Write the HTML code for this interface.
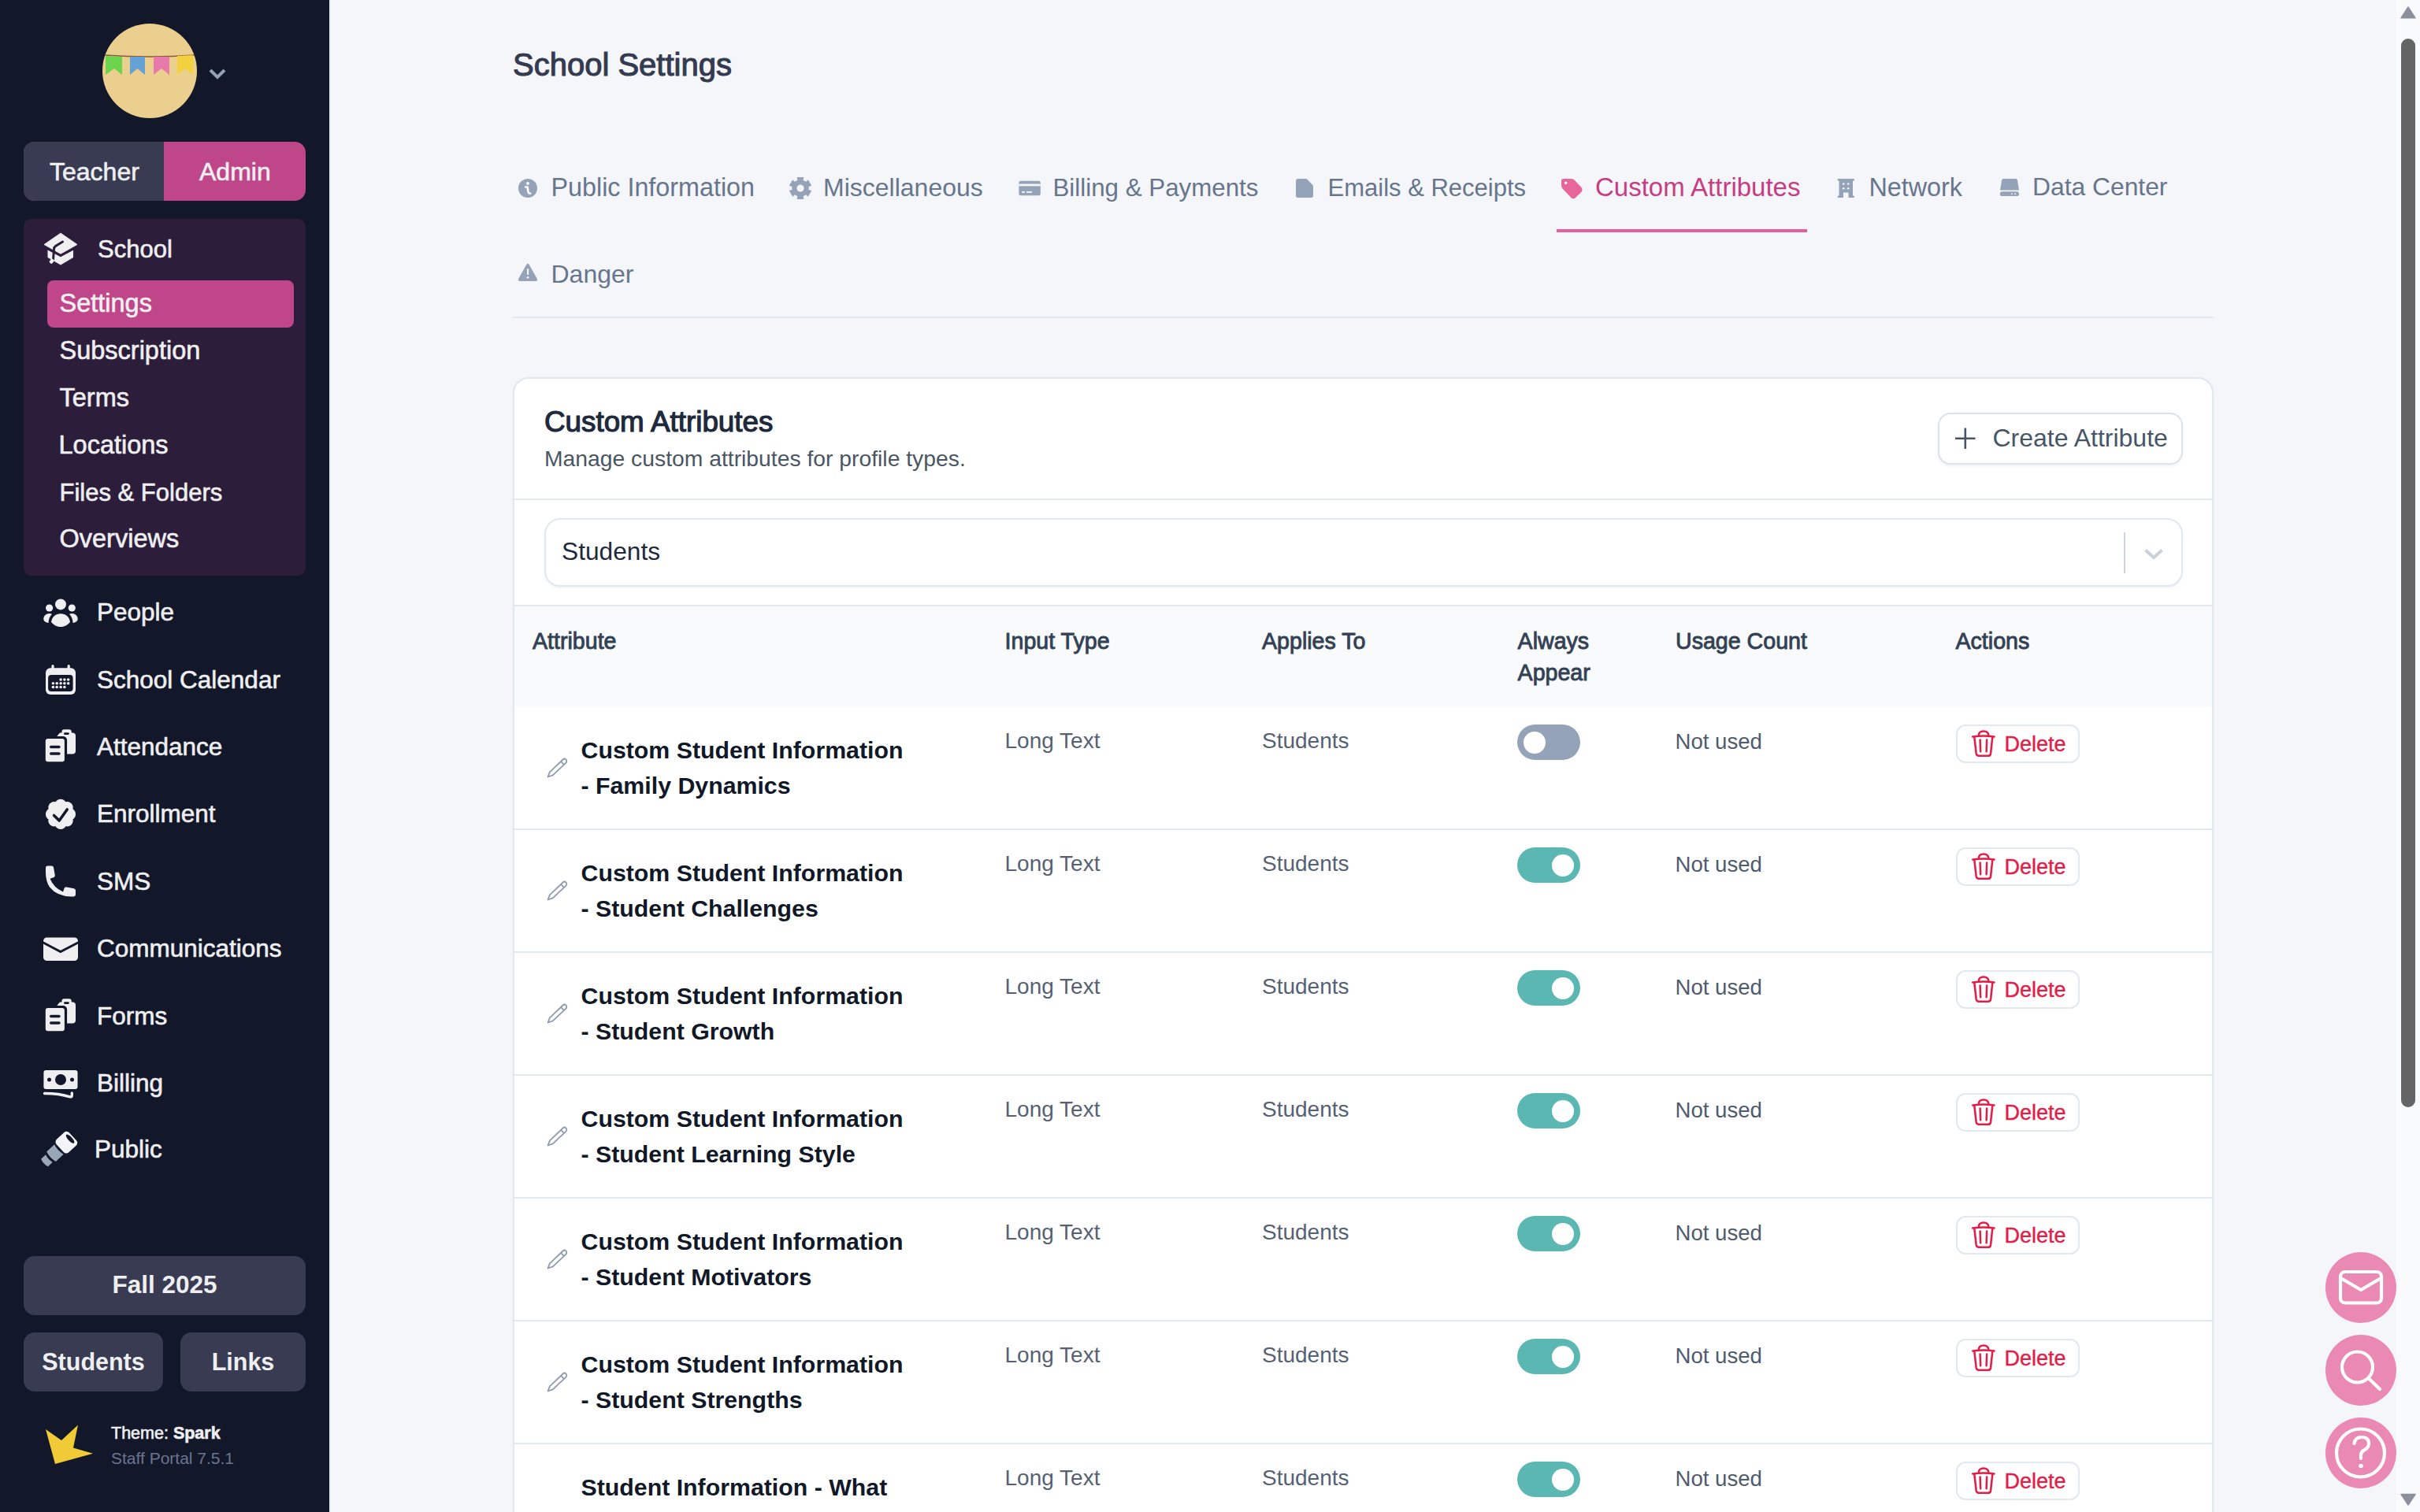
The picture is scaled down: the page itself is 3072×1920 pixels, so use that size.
<!DOCTYPE html><html><head><meta charset="utf-8"><style>
html,body{margin:0;padding:0;width:3072px;height:1920px;overflow:hidden;background:#f4f6fa}
body{position:relative;font-family:"Liberation Sans", sans-serif}
.t{position:absolute;white-space:nowrap}
svg{display:block}
</style></head><body>
<div style="position:absolute;left:0px;top:0px;width:418px;height:1920px;background:#121829"></div>
<div style="position:absolute;left:418px;top:0px;width:2px;height:1920px;background:#e9edf4"></div>
<svg style="position:absolute;left:130px;top:30px;" width="120" height="120" viewBox="0 0 120 120"><circle cx="60" cy="60" r="60" fill="#ebcf8e"/><path d="M3 40 Q60 44 117 40" stroke="#8a5a3a" stroke-width="1.5" fill="none"/><path d="M4 41 L25 42 L25 65 L15 57 L4 65 Z" fill="#6bd34c"/><path d="M35 42 L54 42 L54 65 L44.5 57 L35 65 Z" fill="#63a1d7"/><path d="M65 42 L85 42 L85 65 L75 57 L65 65 Z" fill="#e77aab"/><path d="M95 41 L115 40 L115 65 L105 57 L95 65 Z" fill="#f3d03e"/></svg>
<svg style="position:absolute;left:264px;top:86px;" width="24" height="16" viewBox="0 0 24 16"><path d="M3 3 L12 12 L21 3" stroke="#94a0b4" stroke-width="4" fill="none"/></svg>
<div style="position:absolute;left:30px;top:180px;width:358px;height:75px;border-radius:14px;overflow:hidden;background:#be4689"><div style="position:absolute;left:0;top:0;width:178px;height:75px;background:#383b51"></div></div>
<div style="position:absolute;left:30px;top:278px;width:358px;height:453px;background:#2c1e3a;border-radius:10px"></div>
<div style="position:absolute;left:60px;top:356px;width:313px;height:60px;background:#be4689;border-radius:8px"></div>
<div style="position:absolute;left:420px;top:0px;width:2622px;height:1920px;background:#f4f6fa"></div>
<div style="position:absolute;left:3042px;top:0px;width:30px;height:1920px;background:#f9fafb"></div>
<div class="t" style="left:63.0px;top:201.6px;font-size:32px;line-height:32px;font-weight:400;color:#efeff1;-webkit-text-stroke:0.6px #efeff1;">Teacher</div>
<div class="t" style="left:253.0px;top:201.6px;font-size:32px;line-height:32px;font-weight:400;color:#efeff1;-webkit-text-stroke:0.6px #efeff1;">Admin</div>
<svg style="position:absolute;left:50px;top:290px;" width="56" height="56" viewBox="0 0 56 56"><path d="M10.5 27 L27 35.5 L43 27 L43 37 L27 46.5 L10.5 37 Z" fill="#efeff1"/><path d="M27 6 L48 20.5 L27 32.5 L6 20.5 Z" fill="#efeff1" stroke="#efeff1" stroke-width="0.8" stroke-linejoin="round"/><path d="M8 24.5 L27 34.5 L46 24.5" stroke="#2c1e3a" stroke-width="3" fill="none"/><path d="M29.5 17 L20.5 22.5 Q18.5 24 18.5 26.5 L17.5 40" stroke="#2c1e3a" stroke-width="3" fill="none" stroke-linecap="round"/><rect x="13.5" y="38.5" width="4.5" height="6" rx="1.5" fill="#efeff1" transform="rotate(40 15.5 41.5)"/></svg>
<div class="t" style="left:124.0px;top:301.2px;font-size:31px;line-height:31px;font-weight:400;color:#efeff1;-webkit-text-stroke:0.6px #efeff1;">School</div>
<div class="t" style="left:75.5px;top:369.3px;font-size:32.5px;line-height:32.5px;font-weight:400;color:#efeff1;-webkit-text-stroke:0.6px #efeff1;">Settings</div>
<div class="t" style="left:75.5px;top:429.1px;font-size:32.5px;line-height:32.5px;font-weight:400;color:#efeff1;-webkit-text-stroke:0.6px #efeff1;">Subscription</div>
<div class="t" style="left:75.5px;top:488.9px;font-size:32.5px;line-height:32.5px;font-weight:400;color:#efeff1;-webkit-text-stroke:0.6px #efeff1;">Terms</div>
<div class="t" style="left:74.5px;top:548.7px;font-size:32.5px;line-height:32.5px;font-weight:400;color:#efeff1;-webkit-text-stroke:0.6px #efeff1;">Locations</div>
<div class="t" style="left:75.5px;top:609.8px;font-size:31px;line-height:31px;font-weight:400;color:#efeff1;-webkit-text-stroke:0.6px #efeff1;">Files &amp; Folders</div>
<div class="t" style="left:75.5px;top:668.3px;font-size:32.5px;line-height:32.5px;font-weight:400;color:#efeff1;-webkit-text-stroke:0.6px #efeff1;">Overviews</div>
<div class="t" style="left:123.0px;top:761.8px;font-size:31.5px;line-height:31.5px;font-weight:400;color:#efeff1;-webkit-text-stroke:0.6px #efeff1;">People</div>
<div class="t" style="left:123.0px;top:847.5px;font-size:31.5px;line-height:31.5px;font-weight:400;color:#efeff1;-webkit-text-stroke:0.6px #efeff1;">School Calendar</div>
<div class="t" style="left:123.0px;top:932.8px;font-size:31.5px;line-height:31.5px;font-weight:400;color:#efeff1;-webkit-text-stroke:0.6px #efeff1;">Attendance</div>
<div class="t" style="left:123.0px;top:1018.3px;font-size:31.5px;line-height:31.5px;font-weight:400;color:#efeff1;-webkit-text-stroke:0.6px #efeff1;">Enrollment</div>
<div class="t" style="left:123.0px;top:1103.8px;font-size:31.5px;line-height:31.5px;font-weight:400;color:#efeff1;-webkit-text-stroke:0.6px #efeff1;">SMS</div>
<div class="t" style="left:123.0px;top:1188.8px;font-size:31.5px;line-height:31.5px;font-weight:400;color:#efeff1;-webkit-text-stroke:0.6px #efeff1;">Communications</div>
<div class="t" style="left:123.0px;top:1274.8px;font-size:31.5px;line-height:31.5px;font-weight:400;color:#efeff1;-webkit-text-stroke:0.6px #efeff1;">Forms</div>
<div class="t" style="left:123.0px;top:1359.5px;font-size:31.5px;line-height:31.5px;font-weight:400;color:#efeff1;-webkit-text-stroke:0.6px #efeff1;">Billing</div>
<div class="t" style="left:120.0px;top:1443.8px;font-size:31.5px;line-height:31.5px;font-weight:400;color:#efeff1;-webkit-text-stroke:0.6px #efeff1;">Public</div>
<svg style="position:absolute;left:50px;top:750px;" width="56" height="56" viewBox="0 0 56 56"><g fill="#efeff1"><circle cx="27" cy="17.4" r="7"/><circle cx="12.6" cy="22" r="4.6"/><circle cx="41.3" cy="22" r="4.6"/><path d="M15 40 C16 33 21 29.3 27 29.3 C33 29.3 38 33 39 40 C35 44.5 31 46 27 46 C23 46 19 44.5 15 40 Z"/><path d="M5.3 36 C5.3 32 8.5 29 13 29 L16 29.7 C13 32.5 11.5 37 11.5 41 C8.5 40.5 5.3 39 5.3 36 Z"/><path d="M48.7 36 C48.7 32 45.5 29 41 29 L38 29.7 C41 32.5 42.5 37 42.5 41 C45.5 40.5 48.7 39 48.7 36 Z"/></g></svg>
<svg style="position:absolute;left:50px;top:836px;" width="56" height="56" viewBox="0 0 56 56"><g fill="#efeff1"><rect x="8" y="12.2" width="38" height="33.8" rx="6"/><rect x="15.4" y="8" width="3.2" height="7" rx="1.6"/><rect x="35.6" y="8" width="3.2" height="7" rx="1.6"/></g><rect x="11.1" y="21" width="31.5" height="21" rx="4" fill="#121829"/><g fill="#efeff1"><circle cx="27.1" cy="27" r="1.8"/><circle cx="31.9" cy="27" r="1.8"/><circle cx="36.7" cy="27" r="1.8"/><circle cx="17.4" cy="31.7" r="1.8"/><circle cx="22.2" cy="31.7" r="1.8"/><circle cx="27.1" cy="31.7" r="1.8"/><circle cx="31.9" cy="31.7" r="1.8"/><circle cx="36.7" cy="31.7" r="1.8"/><circle cx="17.4" cy="36.5" r="1.8"/><circle cx="22.2" cy="36.5" r="1.8"/><circle cx="27.1" cy="36.5" r="1.8"/><circle cx="31.9" cy="36.5" r="1.8"/></g></svg>
<svg style="position:absolute;left:50px;top:920px;" width="56" height="56" viewBox="0 0 56 56"><g fill="#efeff1"><path d="M22.6 14.5 L26 10.5 L28.5 10.5 L28.5 9 Q28.5 6.3 31.5 6.3 L37.8 6.3 Q40.7 6.3 40.7 9 L40.7 10.5 L42 10.5 Q46 10.5 46 14.5 L46 33.6 Q46 37.6 42 37.6 L22.6 37.6 Z"/></g><rect x="31" y="10.3" width="6.8" height="2.6" rx="1.3" fill="#121829"/><rect x="4.8" y="15" width="30.3" height="35.4" rx="5" fill="#121829"/><rect x="7.8" y="18" width="24.1" height="29.2" rx="3" fill="#efeff1"/><rect x="13" y="26.8" width="13.7" height="3.5" rx="1.75" fill="#121829"/><rect x="13" y="35.2" width="13.7" height="3.5" rx="1.75" fill="#121829"/></svg>
<svg style="position:absolute;left:50px;top:1005px;" width="56" height="56" viewBox="0 0 56 56"><g fill="#efeff1"><circle cx="27" cy="28.8" r="13"/><circle cx="27.00" cy="17.30" r="7.6"/><circle cx="35.13" cy="20.67" r="7.6"/><circle cx="38.50" cy="28.80" r="7.6"/><circle cx="35.13" cy="36.93" r="7.6"/><circle cx="27.00" cy="40.30" r="7.6"/><circle cx="18.87" cy="36.93" r="7.6"/><circle cx="15.50" cy="28.80" r="7.6"/><circle cx="18.87" cy="20.67" r="7.6"/></g><path d="M18.5 30.5 L25.2 37 L35.2 23" stroke="#121829" stroke-width="3.6" fill="none" stroke-linecap="round" stroke-linejoin="round"/></svg>
<svg style="position:absolute;left:50px;top:1092px;" width="56" height="56" viewBox="0 0 56 56"><path fill="#efeff1" d="M8 10 Q8 7.6 10.5 7.6 L15.5 7.5 Q17.6 7.6 18 9.6 L19.8 19.5 Q20 21.5 18 22.2 L13.5 23.7 Q18 35 30 40.5 L31.6 36 Q32.4 34.1 34.5 34.4 L44 36.3 Q46 36.7 46 39 L46 44 Q46 46.4 43.5 46.4 L40 46.4 Q22 46 13 34.5 Q8 27 8 16 Z"/></svg>
<svg style="position:absolute;left:50px;top:1178px;" width="56" height="56" viewBox="0 0 56 56"><rect x="5" y="12.5" width="44" height="29.5" rx="4.5" fill="#efeff1"/><path d="M4 18.5 L26.8 30.5 L50 18.5" stroke="#121829" stroke-width="3" fill="none"/></svg>
<svg style="position:absolute;left:50px;top:1262px;" width="56" height="56" viewBox="0 0 56 56"><g fill="#efeff1"><path d="M22.6 14.5 L26 10.5 L28.5 10.5 L28.5 9 Q28.5 6.3 31.5 6.3 L37.8 6.3 Q40.7 6.3 40.7 9 L40.7 10.5 L42 10.5 Q46 10.5 46 14.5 L46 33.6 Q46 37.6 42 37.6 L22.6 37.6 Z"/></g><rect x="31" y="10.3" width="6.8" height="2.6" rx="1.3" fill="#121829"/><rect x="4.8" y="15" width="30.3" height="35.4" rx="5" fill="#121829"/><rect x="7.8" y="18" width="24.1" height="29.2" rx="3" fill="#efeff1"/><rect x="13" y="26.8" width="13.7" height="3.5" rx="1.75" fill="#121829"/><rect x="13" y="35.2" width="13.7" height="3.5" rx="1.75" fill="#121829"/></svg>
<svg style="position:absolute;left:50px;top:1350px;" width="56" height="56" viewBox="0 0 56 56"><rect x="5.4" y="8.9" width="43.1" height="24.2" rx="3" fill="#efeff1"/><g fill="#121829"><circle cx="27" cy="21" r="7"/><circle cx="12.5" cy="21" r="2.5"/><circle cx="41.5" cy="21" r="2.5"/></g><path d="M6.5 38.5 Q24 38.3 39 42.8 Q41.3 43.4 41.3 41 L41.3 38" stroke="#efeff1" stroke-width="3.4" fill="none" stroke-linecap="round"/></svg>
<svg style="position:absolute;left:46px;top:1430px;" width="60" height="60" viewBox="0 0 60 60"><g transform="translate(38 21) rotate(-43)"><rect x="-10.5" y="-11.3" width="22" height="22.6" rx="4.5" fill="#f3f4f8"/><ellipse cx="7" cy="0" rx="2.6" ry="7.3" fill="#121829"/><path d="M-12.5 -8.5 L-26 -8.5 Q-28.5 0 -26 8.5 L-12.5 8.5 Q-15 0 -12.5 -8.5 Z" fill="#9aa6b8"/><path d="M-29.5 -6.5 L-37.5 -6.5 Q-40 0 -37.5 6.5 L-29.5 6.5 Q-31.5 0 -29.5 -6.5 Z" fill="#9aa6b8"/></g></svg>
<div style="position:absolute;left:30px;top:1595px;width:358px;height:75px;background:#383b51;border-radius:14px"></div>
<div style="position:absolute;left:30px;top:1692px;width:177px;height:75px;background:#383b51;border-radius:14px"></div>
<div style="position:absolute;left:229px;top:1692px;width:159px;height:75px;background:#383b51;border-radius:14px"></div>
<div class="t" style="left:30px;width:358px;text-align:center;top:1616.3px;font-size:31.5px;line-height:31.5px;font-weight:700;color:#efeff1">Fall 2025</div>
<div class="t" style="left:30px;width:177px;text-align:center;top:1714.2px;font-size:30.5px;line-height:30.5px;font-weight:700;color:#efeff1">Students</div>
<div class="t" style="left:229px;width:159px;text-align:center;top:1714.2px;font-size:30.5px;line-height:30.5px;font-weight:700;color:#efeff1">Links</div>
<svg style="position:absolute;left:0px;top:1560px;" width="140" height="340" viewBox="0 1560 140 340"><path d="M58 1815 L78 1829 L99 1809.5 L93 1838.5 L118 1845.7 L70 1859 Z" fill="#f1ca38"/></svg>
<div class="t" style="left:141.0px;top:1809.8px;font-size:21.5px;line-height:21.5px;font-weight:400;color:#efeff1;-webkit-text-stroke:0.6px #efeff1;">Theme: <b>Spark</b></div>
<div class="t" style="left:141.0px;top:1841.2px;font-size:21px;line-height:21px;font-weight:400;color:#6b7590;">Staff Portal 7.5.1</div>
<div class="t" style="left:651.0px;top:61.9px;font-size:40px;line-height:40px;font-weight:400;color:#343b50;-webkit-text-stroke:1.1px #343b50;">School Settings</div>
<div class="t" style="left:699.5px;top:222.0px;font-size:32.3px;line-height:32.3px;font-weight:400;color:#67758d;">Public Information</div>
<div class="t" style="left:1045.0px;top:222.2px;font-size:32px;line-height:32px;font-weight:400;color:#67758d;">Miscellaneous</div>
<div class="t" style="left:1336.5px;top:222.8px;font-size:31.3px;line-height:31.3px;font-weight:400;color:#67758d;">Billing &amp; Payments</div>
<div class="t" style="left:1685.5px;top:223.1px;font-size:31px;line-height:31px;font-weight:400;color:#67758d;">Emails &amp; Receipts</div>
<div class="t" style="left:2025.0px;top:221.4px;font-size:33px;line-height:33px;font-weight:400;color:#c53d84;">Custom Attributes</div>
<div class="t" style="left:2372.5px;top:222.0px;font-size:32.3px;line-height:32.3px;font-weight:400;color:#67758d;">Network</div>
<div class="t" style="left:2580.0px;top:222.4px;font-size:31.8px;line-height:31.8px;font-weight:400;color:#67758d;">Data Center</div>
<div class="t" style="left:699.5px;top:331.9px;font-size:32px;line-height:32px;font-weight:400;color:#67758d;">Danger</div>
<svg style="position:absolute;left:650px;top:215px;" width="40" height="40" viewBox="650 215 40 40"><circle cx="670" cy="239" r="12" fill="#94a3b8"/><circle cx="670" cy="233" r="1.9" fill="#fff"/><path d="M667.2 237.5 L669.6 237.5 L670.6 244 Q671 246 673.2 245.6" stroke="#fff" stroke-width="2.6" fill="none" stroke-linecap="round" stroke-linejoin="round"/></svg>
<svg style="position:absolute;left:995px;top:215px;" width="45" height="50" viewBox="995 215 45 50"><path d="M1012.48 225.86 L1019.52 225.86 L1018.67 229.05 L1023.28 231.72 L1025.62 229.38 L1029.14 235.48 L1025.95 236.33 L1025.95 241.67 L1029.14 242.52 L1025.62 248.62 L1023.28 246.28 L1018.67 248.95 L1019.52 252.14 L1012.48 252.14 L1013.33 248.95 L1008.72 246.28 L1006.38 248.62 L1002.86 242.52 L1006.05 241.67 L1006.05 236.33 L1002.86 235.48 L1006.38 229.38 L1008.72 231.72 L1013.33 229.05 Z" fill="#94a3b8" stroke="#94a3b8" stroke-width="1.5" stroke-linejoin="round"/><circle cx="1016" cy="239" r="4.6" fill="#f4f6fa"/></svg>
<svg style="position:absolute;left:1290px;top:225px;" width="35" height="28" viewBox="1290 225 35 28"><rect x="1293.4" y="229.8" width="27.4" height="18.4" rx="2.5" fill="#94a3b8"/><rect x="1293.4" y="233.5" width="27.4" height="2.8" fill="#f4f6fa"/><rect x="1297" y="243" width="4" height="1.8" fill="#f4f6fa"/><rect x="1303" y="243" width="7" height="1.8" fill="#f4f6fa"/></svg>
<svg style="position:absolute;left:1640px;top:222px;" width="32" height="34" viewBox="1640 222 32 34"><path d="M1647.5 227 L1658.5 227 L1667 235.5 L1667 248.5 Q1667 251 1664.5 251 L1647.5 251 Q1645 251 1645 248.5 L1645 229.5 Q1645 227 1647.5 227 Z" fill="#94a3b8"/></svg>
<svg style="position:absolute;left:1978px;top:222px;" width="36" height="36" viewBox="1978 222 36 36"><path d="M1984.5 227 L1995 227 Q1997 227 1998.5 228.5 L2007.5 238 Q2009.5 241 2007.5 243.8 L2000 251 Q1997 253.5 1994.5 251 L1983.5 239.5 Q1982 238 1982 235.5 L1982 229.5 Q1982 227 1984.5 227 Z" fill="#e8679b"/><circle cx="1987.7" cy="232.3" r="1.7" fill="#fff"/></svg>
<svg style="position:absolute;left:2328px;top:222px;" width="30" height="34" viewBox="2328 222 30 34"><g fill="#94a3b8"><rect x="2332.8" y="227" width="21" height="2.6"/><rect x="2334.5" y="228" width="17.5" height="22"/><rect x="2332.8" y="248.6" width="21" height="2.4"/></g><rect x="2340" y="244.5" width="6.5" height="6.6" fill="#f4f6fa"/><g fill="#f4f6fa"><circle cx="2340.2" cy="233.5" r="1.3"/><circle cx="2346.2" cy="233.5" r="1.3"/><circle cx="2340.2" cy="239.3" r="1.3"/><circle cx="2346.2" cy="239.3" r="1.3"/></g></svg>
<svg style="position:absolute;left:2535px;top:222px;" width="32" height="32" viewBox="2535 222 32 32"><path d="M2543 227 L2559 227 Q2560.5 227 2561 229 L2563 241.5 L2539 241.5 L2541 229 Q2541.5 227 2543 227 Z" fill="#94a3b8"/><rect x="2538.8" y="243.3" width="24.2" height="5.8" rx="2.9" fill="#94a3b8"/><circle cx="2553.8" cy="246.2" r="0.9" fill="#f4f6fa"/><circle cx="2558.2" cy="246.2" r="1" fill="#f4f6fa"/></svg>
<svg style="position:absolute;left:655px;top:332px;" width="30" height="28" viewBox="655 332 30 28"><path d="M668.3 336 Q670 333.3 671.7 336 L681.7 353.8 Q683 357 679.8 357 L660.2 357 Q657 357 658.3 353.8 Z" fill="#94a3b8"/><rect x="669" y="341" width="2.2" height="8" rx="1" fill="#f4f6fa"/><circle cx="670.1" cy="352.3" r="1.4" fill="#f4f6fa"/></svg>
<div style="position:absolute;left:1976px;top:291px;width:318px;height:4px;background:#e5609a"></div>
<div style="position:absolute;left:651px;top:401.5px;width:2159px;height:2.0px;background:#e2e8f0"></div>
<div style="position:absolute;left:651px;top:479px;width:2155px;height:1600px;background:#fff;border:2px solid #e2e8f0;border-radius:20px;box-shadow:0 1px 3px rgba(15,23,42,0.05)"></div>
<div class="t" style="left:691.0px;top:518.2px;font-size:36.8px;line-height:36.8px;font-weight:400;color:#1e293b;-webkit-text-stroke:1.2px #1e293b;">Custom Attributes</div>
<div class="t" style="left:691.0px;top:568.3px;font-size:28.3px;line-height:28.3px;font-weight:400;color:#4b5563;">Manage custom attributes for profile types.</div>
<div style="position:absolute;left:2460px;top:523.5px;width:307px;height:62px;border:2px solid #dbe2ea;border-radius:16px;background:#fff;box-shadow:0 2px 3px rgba(15,23,42,0.06)"></div>
<svg style="position:absolute;left:2478px;top:540px;" width="34" height="34" viewBox="2478 540 34 34"><path d="M2494.8 543.6 L2494.8 570 M2482 556.8 L2507.5 556.8" stroke="#475569" stroke-width="2.6"/></svg>
<div class="t" style="left:2529.5px;top:539.9px;font-size:32px;line-height:32px;font-weight:400;color:#475569;">Create Attribute</div>
<div style="position:absolute;left:653px;top:632.7px;width:2155px;height:2.0px;background:#e2e8f0"></div>
<div style="position:absolute;left:691px;top:658px;width:2076px;height:83px;border:2px solid #e2e8f0;border-radius:20px;background:#fff;box-shadow:0 2px 3px rgba(15,23,42,0.05)"></div>
<div class="t" style="left:713.0px;top:684.8px;font-size:31.7px;line-height:31.7px;font-weight:400;color:#1e293b;">Students</div>
<div style="position:absolute;left:2696px;top:676px;width:2px;height:52px;background:#cfd5dd"></div>
<svg style="position:absolute;left:2716px;top:690px;" width="36" height="26" viewBox="2716 690 36 26"><path d="M2723.5 698.5 L2734 708 L2744.5 698.5" stroke="#cbd1d9" stroke-width="4" fill="none"/></svg>
<div style="position:absolute;left:653px;top:768px;width:2155px;height:2px;background:#e2e8f0"></div>
<div style="position:absolute;left:653px;top:770px;width:2155px;height:128px;background:#f8fafc"></div>
<div class="t" style="left:676.0px;top:800.4px;font-size:28.6px;line-height:28.6px;font-weight:400;color:#334155;-webkit-text-stroke:0.9px #334155;">Attribute</div>
<div class="t" style="left:1275.6px;top:800.4px;font-size:28.6px;line-height:28.6px;font-weight:400;color:#334155;-webkit-text-stroke:0.9px #334155;">Input Type</div>
<div class="t" style="left:1602.0px;top:800.4px;font-size:28.6px;line-height:28.6px;font-weight:400;color:#334155;-webkit-text-stroke:0.9px #334155;">Applies To</div>
<div class="t" style="left:1926.6px;top:799.6px;font-size:28.6px;line-height:28.6px;font-weight:400;color:#334155;-webkit-text-stroke:0.9px #334155;">Always</div>
<div class="t" style="left:1926.6px;top:840.0px;font-size:28.6px;line-height:28.6px;font-weight:400;color:#334155;-webkit-text-stroke:0.9px #334155;">Appear</div>
<div class="t" style="left:2127.0px;top:800.4px;font-size:28.6px;line-height:28.6px;font-weight:400;color:#334155;-webkit-text-stroke:0.9px #334155;">Usage Count</div>
<div class="t" style="left:2482.5px;top:800.4px;font-size:28.6px;line-height:28.6px;font-weight:400;color:#334155;-webkit-text-stroke:0.9px #334155;">Actions</div>
<svg style="position:absolute;left:688px;top:955px;" width="40" height="40" viewBox="0 0 40 40"><g transform="translate(7.5 31.5) rotate(-43.5)" stroke="#8e9bb1" stroke-width="1.8" fill="none" stroke-linejoin="round"><path d="M0 0 L6 -2.8 L29 -2.8 A2.8 2.8 0 0 1 29 2.8 L6 2.8 Z"/><path d="M25.5 -2.8 L25.5 2.8"/></g></svg>
<div class="t" style="left:737.5px;top:937.9px;font-size:30.3px;line-height:30.3px;font-weight:700;color:#111827;">Custom Student Information</div>
<div class="t" style="left:737.5px;top:983.3px;font-size:30.3px;line-height:30.3px;font-weight:700;color:#111827;">- Family Dynamics</div>
<div class="t" style="left:1275.5px;top:927.3px;font-size:28px;line-height:28px;font-weight:400;color:#566173;">Long Text</div>
<div class="t" style="left:1602.0px;top:927.3px;font-size:28px;line-height:28px;font-weight:400;color:#566173;">Students</div>
<div style="position:absolute;left:1926px;top:920px;width:80px;height:45px;background:#94a3b8;border-radius:23px"></div>
<div style="position:absolute;left:1933.5px;top:928.5px;width:28px;height:28px;border-radius:50%;background:#fff"></div>
<div class="t" style="left:2126.5px;top:927.6px;font-size:27.6px;line-height:27.6px;font-weight:400;color:#4f5b6e;">Not used</div>
<div style="position:absolute;left:2482.5px;top:919.5px;width:153px;height:45.5px;border:2px solid #e2e8f0;border-radius:12px;background:#fff"></div>
<svg style="position:absolute;left:2495px;top:920px;" width="50" height="50" viewBox="0 0 50 50"><g stroke="#e11d48" stroke-width="2.5" fill="none" stroke-linecap="round" stroke-linejoin="round"><path d="M9.2 15.6 Q23 13.3 36.5 15.6"/><path d="M16.8 13.8 Q17 8.4 23 8.4 Q29 8.4 29.3 13.8"/><path d="M11.3 16 L13.7 37 Q14.2 39.8 17 39.8 L28.8 39.8 Q31.6 39.8 32 37 L34.3 16"/><path d="M18.6 19.6 L19.1 34.2 M27.1 19.6 L26.6 34.2"/></g></svg>
<div class="t" style="left:2544.5px;top:931.6px;font-size:27px;line-height:27px;font-weight:400;color:#e11d48;-webkit-text-stroke:0.4px #e11d48;">Delete</div>
<div style="position:absolute;left:653px;top:1052px;width:2155px;height:2px;background:#e2e8f0"></div>
<svg style="position:absolute;left:688px;top:1111px;" width="40" height="40" viewBox="0 0 40 40"><g transform="translate(7.5 31.5) rotate(-43.5)" stroke="#8e9bb1" stroke-width="1.8" fill="none" stroke-linejoin="round"><path d="M0 0 L6 -2.8 L29 -2.8 A2.8 2.8 0 0 1 29 2.8 L6 2.8 Z"/><path d="M25.5 -2.8 L25.5 2.8"/></g></svg>
<div class="t" style="left:737.5px;top:1093.9px;font-size:30.3px;line-height:30.3px;font-weight:700;color:#111827;">Custom Student Information</div>
<div class="t" style="left:737.5px;top:1139.3px;font-size:30.3px;line-height:30.3px;font-weight:700;color:#111827;">- Student Challenges</div>
<div class="t" style="left:1275.5px;top:1083.3px;font-size:28px;line-height:28px;font-weight:400;color:#566173;">Long Text</div>
<div class="t" style="left:1602.0px;top:1083.3px;font-size:28px;line-height:28px;font-weight:400;color:#566173;">Students</div>
<div style="position:absolute;left:1926px;top:1076px;width:80px;height:45px;background:#5bb7b1;border-radius:23px"></div>
<div style="position:absolute;left:1970px;top:1084.5px;width:28px;height:28px;border-radius:50%;background:#fff"></div>
<div class="t" style="left:2126.5px;top:1083.6px;font-size:27.6px;line-height:27.6px;font-weight:400;color:#4f5b6e;">Not used</div>
<div style="position:absolute;left:2482.5px;top:1075.5px;width:153px;height:45.5px;border:2px solid #e2e8f0;border-radius:12px;background:#fff"></div>
<svg style="position:absolute;left:2495px;top:1076px;" width="50" height="50" viewBox="0 0 50 50"><g stroke="#e11d48" stroke-width="2.5" fill="none" stroke-linecap="round" stroke-linejoin="round"><path d="M9.2 15.6 Q23 13.3 36.5 15.6"/><path d="M16.8 13.8 Q17 8.4 23 8.4 Q29 8.4 29.3 13.8"/><path d="M11.3 16 L13.7 37 Q14.2 39.8 17 39.8 L28.8 39.8 Q31.6 39.8 32 37 L34.3 16"/><path d="M18.6 19.6 L19.1 34.2 M27.1 19.6 L26.6 34.2"/></g></svg>
<div class="t" style="left:2544.5px;top:1087.6px;font-size:27px;line-height:27px;font-weight:400;color:#e11d48;-webkit-text-stroke:0.4px #e11d48;">Delete</div>
<div style="position:absolute;left:653px;top:1208px;width:2155px;height:2px;background:#e2e8f0"></div>
<svg style="position:absolute;left:688px;top:1267px;" width="40" height="40" viewBox="0 0 40 40"><g transform="translate(7.5 31.5) rotate(-43.5)" stroke="#8e9bb1" stroke-width="1.8" fill="none" stroke-linejoin="round"><path d="M0 0 L6 -2.8 L29 -2.8 A2.8 2.8 0 0 1 29 2.8 L6 2.8 Z"/><path d="M25.5 -2.8 L25.5 2.8"/></g></svg>
<div class="t" style="left:737.5px;top:1249.9px;font-size:30.3px;line-height:30.3px;font-weight:700;color:#111827;">Custom Student Information</div>
<div class="t" style="left:737.5px;top:1295.3px;font-size:30.3px;line-height:30.3px;font-weight:700;color:#111827;">- Student Growth</div>
<div class="t" style="left:1275.5px;top:1239.3px;font-size:28px;line-height:28px;font-weight:400;color:#566173;">Long Text</div>
<div class="t" style="left:1602.0px;top:1239.3px;font-size:28px;line-height:28px;font-weight:400;color:#566173;">Students</div>
<div style="position:absolute;left:1926px;top:1232px;width:80px;height:45px;background:#5bb7b1;border-radius:23px"></div>
<div style="position:absolute;left:1970px;top:1240.5px;width:28px;height:28px;border-radius:50%;background:#fff"></div>
<div class="t" style="left:2126.5px;top:1239.6px;font-size:27.6px;line-height:27.6px;font-weight:400;color:#4f5b6e;">Not used</div>
<div style="position:absolute;left:2482.5px;top:1231.5px;width:153px;height:45.5px;border:2px solid #e2e8f0;border-radius:12px;background:#fff"></div>
<svg style="position:absolute;left:2495px;top:1232px;" width="50" height="50" viewBox="0 0 50 50"><g stroke="#e11d48" stroke-width="2.5" fill="none" stroke-linecap="round" stroke-linejoin="round"><path d="M9.2 15.6 Q23 13.3 36.5 15.6"/><path d="M16.8 13.8 Q17 8.4 23 8.4 Q29 8.4 29.3 13.8"/><path d="M11.3 16 L13.7 37 Q14.2 39.8 17 39.8 L28.8 39.8 Q31.6 39.8 32 37 L34.3 16"/><path d="M18.6 19.6 L19.1 34.2 M27.1 19.6 L26.6 34.2"/></g></svg>
<div class="t" style="left:2544.5px;top:1243.6px;font-size:27px;line-height:27px;font-weight:400;color:#e11d48;-webkit-text-stroke:0.4px #e11d48;">Delete</div>
<div style="position:absolute;left:653px;top:1364px;width:2155px;height:2px;background:#e2e8f0"></div>
<svg style="position:absolute;left:688px;top:1423px;" width="40" height="40" viewBox="0 0 40 40"><g transform="translate(7.5 31.5) rotate(-43.5)" stroke="#8e9bb1" stroke-width="1.8" fill="none" stroke-linejoin="round"><path d="M0 0 L6 -2.8 L29 -2.8 A2.8 2.8 0 0 1 29 2.8 L6 2.8 Z"/><path d="M25.5 -2.8 L25.5 2.8"/></g></svg>
<div class="t" style="left:737.5px;top:1405.9px;font-size:30.3px;line-height:30.3px;font-weight:700;color:#111827;">Custom Student Information</div>
<div class="t" style="left:737.5px;top:1451.3px;font-size:30.3px;line-height:30.3px;font-weight:700;color:#111827;">- Student Learning Style</div>
<div class="t" style="left:1275.5px;top:1395.3px;font-size:28px;line-height:28px;font-weight:400;color:#566173;">Long Text</div>
<div class="t" style="left:1602.0px;top:1395.3px;font-size:28px;line-height:28px;font-weight:400;color:#566173;">Students</div>
<div style="position:absolute;left:1926px;top:1388px;width:80px;height:45px;background:#5bb7b1;border-radius:23px"></div>
<div style="position:absolute;left:1970px;top:1396.5px;width:28px;height:28px;border-radius:50%;background:#fff"></div>
<div class="t" style="left:2126.5px;top:1395.6px;font-size:27.6px;line-height:27.6px;font-weight:400;color:#4f5b6e;">Not used</div>
<div style="position:absolute;left:2482.5px;top:1387.5px;width:153px;height:45.5px;border:2px solid #e2e8f0;border-radius:12px;background:#fff"></div>
<svg style="position:absolute;left:2495px;top:1388px;" width="50" height="50" viewBox="0 0 50 50"><g stroke="#e11d48" stroke-width="2.5" fill="none" stroke-linecap="round" stroke-linejoin="round"><path d="M9.2 15.6 Q23 13.3 36.5 15.6"/><path d="M16.8 13.8 Q17 8.4 23 8.4 Q29 8.4 29.3 13.8"/><path d="M11.3 16 L13.7 37 Q14.2 39.8 17 39.8 L28.8 39.8 Q31.6 39.8 32 37 L34.3 16"/><path d="M18.6 19.6 L19.1 34.2 M27.1 19.6 L26.6 34.2"/></g></svg>
<div class="t" style="left:2544.5px;top:1399.6px;font-size:27px;line-height:27px;font-weight:400;color:#e11d48;-webkit-text-stroke:0.4px #e11d48;">Delete</div>
<div style="position:absolute;left:653px;top:1520px;width:2155px;height:2px;background:#e2e8f0"></div>
<svg style="position:absolute;left:688px;top:1579px;" width="40" height="40" viewBox="0 0 40 40"><g transform="translate(7.5 31.5) rotate(-43.5)" stroke="#8e9bb1" stroke-width="1.8" fill="none" stroke-linejoin="round"><path d="M0 0 L6 -2.8 L29 -2.8 A2.8 2.8 0 0 1 29 2.8 L6 2.8 Z"/><path d="M25.5 -2.8 L25.5 2.8"/></g></svg>
<div class="t" style="left:737.5px;top:1561.9px;font-size:30.3px;line-height:30.3px;font-weight:700;color:#111827;">Custom Student Information</div>
<div class="t" style="left:737.5px;top:1607.3px;font-size:30.3px;line-height:30.3px;font-weight:700;color:#111827;">- Student Motivators</div>
<div class="t" style="left:1275.5px;top:1551.3px;font-size:28px;line-height:28px;font-weight:400;color:#566173;">Long Text</div>
<div class="t" style="left:1602.0px;top:1551.3px;font-size:28px;line-height:28px;font-weight:400;color:#566173;">Students</div>
<div style="position:absolute;left:1926px;top:1544px;width:80px;height:45px;background:#5bb7b1;border-radius:23px"></div>
<div style="position:absolute;left:1970px;top:1552.5px;width:28px;height:28px;border-radius:50%;background:#fff"></div>
<div class="t" style="left:2126.5px;top:1551.6px;font-size:27.6px;line-height:27.6px;font-weight:400;color:#4f5b6e;">Not used</div>
<div style="position:absolute;left:2482.5px;top:1543.5px;width:153px;height:45.5px;border:2px solid #e2e8f0;border-radius:12px;background:#fff"></div>
<svg style="position:absolute;left:2495px;top:1544px;" width="50" height="50" viewBox="0 0 50 50"><g stroke="#e11d48" stroke-width="2.5" fill="none" stroke-linecap="round" stroke-linejoin="round"><path d="M9.2 15.6 Q23 13.3 36.5 15.6"/><path d="M16.8 13.8 Q17 8.4 23 8.4 Q29 8.4 29.3 13.8"/><path d="M11.3 16 L13.7 37 Q14.2 39.8 17 39.8 L28.8 39.8 Q31.6 39.8 32 37 L34.3 16"/><path d="M18.6 19.6 L19.1 34.2 M27.1 19.6 L26.6 34.2"/></g></svg>
<div class="t" style="left:2544.5px;top:1555.6px;font-size:27px;line-height:27px;font-weight:400;color:#e11d48;-webkit-text-stroke:0.4px #e11d48;">Delete</div>
<div style="position:absolute;left:653px;top:1676px;width:2155px;height:2px;background:#e2e8f0"></div>
<svg style="position:absolute;left:688px;top:1735px;" width="40" height="40" viewBox="0 0 40 40"><g transform="translate(7.5 31.5) rotate(-43.5)" stroke="#8e9bb1" stroke-width="1.8" fill="none" stroke-linejoin="round"><path d="M0 0 L6 -2.8 L29 -2.8 A2.8 2.8 0 0 1 29 2.8 L6 2.8 Z"/><path d="M25.5 -2.8 L25.5 2.8"/></g></svg>
<div class="t" style="left:737.5px;top:1717.9px;font-size:30.3px;line-height:30.3px;font-weight:700;color:#111827;">Custom Student Information</div>
<div class="t" style="left:737.5px;top:1763.3px;font-size:30.3px;line-height:30.3px;font-weight:700;color:#111827;">- Student Strengths</div>
<div class="t" style="left:1275.5px;top:1707.3px;font-size:28px;line-height:28px;font-weight:400;color:#566173;">Long Text</div>
<div class="t" style="left:1602.0px;top:1707.3px;font-size:28px;line-height:28px;font-weight:400;color:#566173;">Students</div>
<div style="position:absolute;left:1926px;top:1700px;width:80px;height:45px;background:#5bb7b1;border-radius:23px"></div>
<div style="position:absolute;left:1970px;top:1708.5px;width:28px;height:28px;border-radius:50%;background:#fff"></div>
<div class="t" style="left:2126.5px;top:1707.6px;font-size:27.6px;line-height:27.6px;font-weight:400;color:#4f5b6e;">Not used</div>
<div style="position:absolute;left:2482.5px;top:1699.5px;width:153px;height:45.5px;border:2px solid #e2e8f0;border-radius:12px;background:#fff"></div>
<svg style="position:absolute;left:2495px;top:1700px;" width="50" height="50" viewBox="0 0 50 50"><g stroke="#e11d48" stroke-width="2.5" fill="none" stroke-linecap="round" stroke-linejoin="round"><path d="M9.2 15.6 Q23 13.3 36.5 15.6"/><path d="M16.8 13.8 Q17 8.4 23 8.4 Q29 8.4 29.3 13.8"/><path d="M11.3 16 L13.7 37 Q14.2 39.8 17 39.8 L28.8 39.8 Q31.6 39.8 32 37 L34.3 16"/><path d="M18.6 19.6 L19.1 34.2 M27.1 19.6 L26.6 34.2"/></g></svg>
<div class="t" style="left:2544.5px;top:1711.6px;font-size:27px;line-height:27px;font-weight:400;color:#e11d48;-webkit-text-stroke:0.4px #e11d48;">Delete</div>
<div style="position:absolute;left:653px;top:1832px;width:2155px;height:2px;background:#e2e8f0"></div>
<div class="t" style="left:737.5px;top:1873.9px;font-size:30.3px;line-height:30.3px;font-weight:700;color:#111827;">Student Information - What</div>
<div class="t" style="left:1275.5px;top:1863.3px;font-size:28px;line-height:28px;font-weight:400;color:#566173;">Long Text</div>
<div class="t" style="left:1602.0px;top:1863.3px;font-size:28px;line-height:28px;font-weight:400;color:#566173;">Students</div>
<div style="position:absolute;left:1926px;top:1856px;width:80px;height:45px;background:#5bb7b1;border-radius:23px"></div>
<div style="position:absolute;left:1970px;top:1864.5px;width:28px;height:28px;border-radius:50%;background:#fff"></div>
<div class="t" style="left:2126.5px;top:1863.6px;font-size:27.6px;line-height:27.6px;font-weight:400;color:#4f5b6e;">Not used</div>
<div style="position:absolute;left:2482.5px;top:1855.5px;width:153px;height:45.5px;border:2px solid #e2e8f0;border-radius:12px;background:#fff"></div>
<svg style="position:absolute;left:2495px;top:1856px;" width="50" height="50" viewBox="0 0 50 50"><g stroke="#e11d48" stroke-width="2.5" fill="none" stroke-linecap="round" stroke-linejoin="round"><path d="M9.2 15.6 Q23 13.3 36.5 15.6"/><path d="M16.8 13.8 Q17 8.4 23 8.4 Q29 8.4 29.3 13.8"/><path d="M11.3 16 L13.7 37 Q14.2 39.8 17 39.8 L28.8 39.8 Q31.6 39.8 32 37 L34.3 16"/><path d="M18.6 19.6 L19.1 34.2 M27.1 19.6 L26.6 34.2"/></g></svg>
<div class="t" style="left:2544.5px;top:1867.6px;font-size:27px;line-height:27px;font-weight:400;color:#e11d48;-webkit-text-stroke:0.4px #e11d48;">Delete</div>
<div style="position:absolute;left:653px;top:1988px;width:2155px;height:2px;background:#e2e8f0"></div>
<svg style="position:absolute;left:3042px;top:0px;" width="30" height="1920" viewBox="3042 0 30 1920"><path d="M3057 9 L3066 22.8 L3048 22.8 Z" fill="#8b909c" stroke="#8b909c" stroke-width="1.5" stroke-linejoin="round"/><rect x="3048" y="49" width="18" height="1357" rx="9" fill="#646464"/><path d="M3048 1897.5 L3066 1897.5 L3057 1911 Z" fill="#8b909c" stroke="#8b909c" stroke-width="1.5" stroke-linejoin="round"/></svg>
<svg style="position:absolute;left:2950px;top:1588px;" width="94" height="304" viewBox="2950 1588 94 304"><circle cx="2997" cy="1635" r="45" fill="#e989b4"/><circle cx="2997" cy="1740" r="45" fill="#e989b4"/><circle cx="2997" cy="1845" r="45" fill="#e989b4"/><g stroke="#fff" stroke-width="4.2" fill="none" stroke-linecap="round" stroke-linejoin="round"><rect x="2971" y="1615" width="52" height="39.5" rx="6"/><path d="M2971.5 1623 L2997 1638 L3022.5 1623"/><circle cx="2992.5" cy="1736" r="19.5"/><path d="M3006.5 1750 L3021 1764"/><circle cx="2996.5" cy="1845" r="30.5"/><path d="M2988.5 1833 Q2989.5 1825 2998 1825 Q3007 1825 3007 1833 Q3007 1838.5 3001 1841.5 Q2997 1843.5 2997 1848 L2997 1852"/></g><circle cx="2997" cy="1861.5" r="2.8" fill="#fff"/></svg>
</body></html>
